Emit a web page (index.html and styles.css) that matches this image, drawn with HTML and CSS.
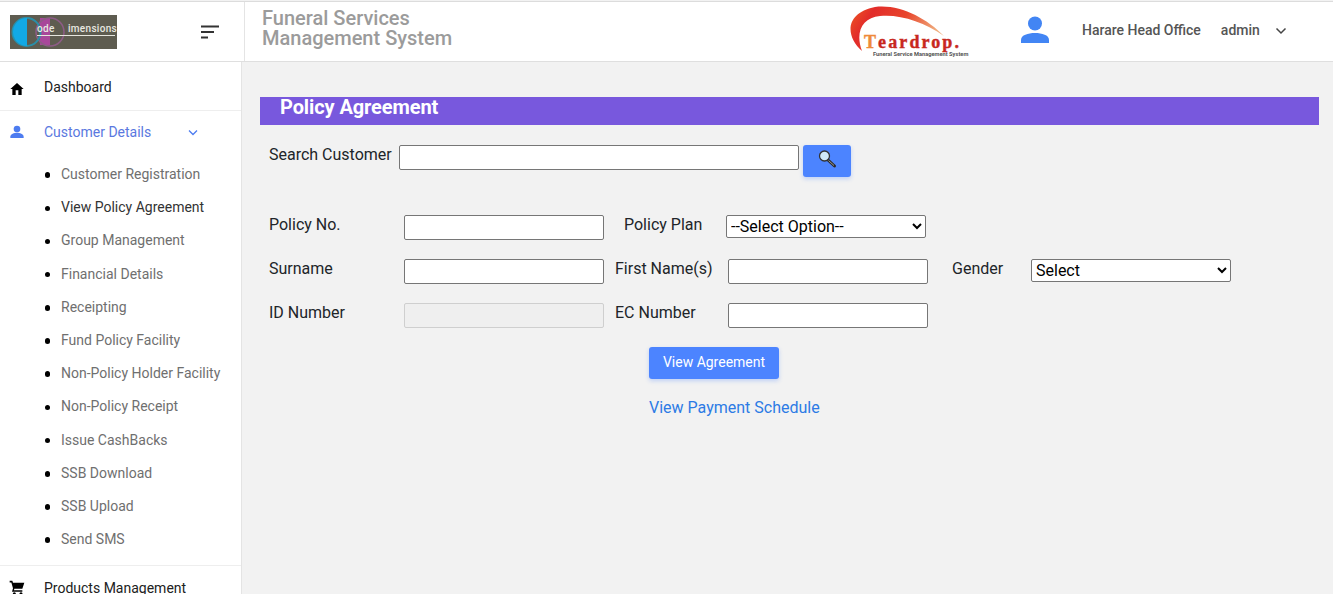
FILE: index.html
```html
<!DOCTYPE html>
<html lang="en">
<head>
  <meta charset="UTF-8" />
  <meta name="viewport" content="width=device-width, initial-scale=1.0"/>
  <title>Policy Agreement</title>
  <link rel="stylesheet" href="styles.css">
</head>
<body>
<header class="topbar">
  <div class="brand">
    <div class="code-logo">
      <svg class="code-logo-art" width="107" height="34" viewBox="0 0 107 34">
        <rect x="30" y="3" width="10" height="27" fill="#a8479a"/>
        <circle cx="40" cy="17" r="14" fill="none" stroke="#8d5c86" stroke-width="1.500"/>
        <circle cx="16.500" cy="17" r="14" fill="none" stroke="#2a8fa8" stroke-width="2"/>
        <path d="M17 3 A14 14 0 0 0 17 31 Z" fill="#12a9e6"/>
        <rect x="27" y="20" width="78" height="1" fill="#e6e6de"/>
      </svg>
      <span class="code-word code-word-a">ode</span>
      <span class="code-word code-word-b">imensions</span>
    </div>
    <button class="menu-toggle" aria-label="Menu">
      <svg width="20" height="14" viewBox="0 0 20 14"><path d="M1 1.500h18M1 7h13M1 12.500h7" stroke="#333" stroke-width="2" fill="none"/></svg>
    </button>
  </div>
  <div class="app-title">
    <span class="title-line">Funeral Services</span>
    <span class="title-line">Management System</span>
  </div>
  <div class="teardrop">
    <svg width="122" height="52" viewBox="0 0 122 52">
      <defs>
        <linearGradient id="swoosh" x1="0" y1="0" x2="1" y2="0.300">
          <stop offset="0" stop-color="#ee5a22"/>
          <stop offset="0.250" stop-color="#e22c2a"/>
          <stop offset="0.600" stop-color="#e8452c"/>
          <stop offset="1" stop-color="#f0b080"/>
        </linearGradient>
      </defs>
      <path d="M14 45 C-3 30 -3 7 27 1 C52 -2 78 12 96 30 C76 16 52 8 32 10 C14 12 7 26 14 45 Z" fill="url(#swoosh)"/>
    </svg>
    <span class="teardrop-name"><b>T</b>eardrop.</span>
    <span class="teardrop-sub">Funeral Service Management System</span>
  </div>
  <svg class="user-icon" width="28" height="28" viewBox="0 0 28 28"><circle cx="14" cy="7.500" r="7" fill="#4285f4"/><path d="M0 27v-3c0-5 7-7 14-7s14 2 14 7v3z" fill="#4285f4"/></svg>
  <span class="office">Harare Head Office</span>
  <span class="username">admin</span>
  <svg class="user-caret" width="12" height="8" viewBox="0 0 12 8"><path d="M1.500 1.500 6 6l4.500-4.500" stroke="#444" stroke-width="1.500" fill="none"/></svg>
</header>

<div class="layout">
  <nav class="sidebar">
    <div class="nav-item nav-dashboard">
      <svg class="nav-icon" width="16" height="16" viewBox="0 0 24 24"><path d="M10 21v-7h4v7h5v-9h3L12 3 2 12h3v9z" fill="#000"/></svg>
      <span>Dashboard</span>
    </div>
    <div class="nav-item nav-customer">
      <svg class="nav-icon" width="16" height="16" viewBox="0 0 24 24"><circle cx="12" cy="7.500" r="5" fill="#4d7cf0"/><path d="M2 21v-2c0-4 6-6 10-6s10 2 10 6v2z" fill="#4d7cf0"/></svg>
      <span>Customer Details</span>
      <svg class="nav-caret" width="10" height="7" viewBox="0 0 10 7"><path d="M1 1.500 5 5.500l4-4" stroke="#4d7cf0" stroke-width="1.300" fill="none"/></svg>
    </div>
    <ul class="subnav">
      <li>Customer Registration</li>
      <li class="current">View Policy Agreement</li>
      <li>Group Management</li>
      <li>Financial Details</li>
      <li>Receipting</li>
      <li>Fund Policy Facility</li>
      <li>Non-Policy Holder Facility</li>
      <li>Non-Policy Receipt</li>
      <li>Issue CashBacks</li>
      <li>SSB Download</li>
      <li>SSB Upload</li>
      <li>Send SMS</li>
    </ul>
    <div class="nav-item nav-products">
      <svg class="nav-icon" width="17" height="17" viewBox="0 0 24 24"><path d="M1 2h4l1 3h17l-3 9H8l-.5 2H20v2.500H4.500L6 13 3.500 4.500H1z" fill="#000"/><circle cx="8" cy="21.500" r="2.300" fill="#000"/><circle cx="18" cy="21.500" r="2.300" fill="#000"/></svg>
      <span>Products Management</span>
    </div>
  </nav>

  <main class="content">
    <h1 class="banner">Policy Agreement</h1>

    <div class="search-row">
      <label class="search-label">Search Customer</label>
      <input type="text" class="field search-field">
      <button class="btn search-btn" aria-label="Search">
        <svg width="20" height="20" viewBox="0 0 20 20">
          <path d="M11 11l6.500 6" stroke="#2b2b2b" stroke-width="3" stroke-linecap="round"/>
          <path d="M11.500 11.500l5.500 5" stroke="#9a9a9a" stroke-width="1"/>
          <circle cx="7.500" cy="7" r="5" fill="#cfe8f8" stroke="#333" stroke-width="1.300"/>
        </svg>
      </button>
    </div>

    <div class="form-row">
      <label class="lbl-first">Policy No.</label>
      <input type="text" class="field">
      <label class="lbl-plan">Policy Plan</label>
      <select class="field-select">
        <option>--Select Option--</option>
      </select>
    </div>

    <div class="form-row">
      <label class="lbl-first">Surname</label>
      <input type="text" class="field">
      <label class="lbl-second">First Name(s)</label>
      <input type="text" class="field">
      <label class="lbl-gender">Gender</label>
      <select class="field-select">
        <option>Select</option>
      </select>
    </div>

    <div class="form-row">
      <label class="lbl-first">ID Number</label>
      <input type="text" class="field" disabled>
      <label class="lbl-second">EC Number</label>
      <input type="text" class="field">
    </div>

    <button class="btn view-btn">View Agreement</button>
    <a class="schedule-link" href="#">View Payment Schedule</a>
  </main>
</div>
</body>
</html>
```

FILE: styles.css
```css
html, body {
  height: 100%;
}

body {
  margin: 0;
  height: 594px;
  overflow: hidden;
  font-family: Roboto, "Liberation Sans", sans-serif;
  background-color: #f2f2f2;
  color: #212529;
}

.topbar {
  display: flex;
  align-items: center;
  height: 59px;
  margin-top: 1px;
  background-color: white;
  border-top: 1px solid #dcdcdc;
  border-bottom: 1px solid #dfdfdf;
  box-sizing: content-box;
}

.brand {
  display: flex;
  align-items: center;
  justify-content: space-between;
  width: 245px;
  height: 100%;
  padding: 0 24px 0 10px;
  box-sizing: border-box;
  border-right: 1px solid #e4e4e4;
  flex-shrink: 0;
}

.code-logo {
  position: relative;
  width: 107px;
  height: 34px;
  background-color: #5e5c50;
}

.code-logo-art {
  display: block;
}

.code-word {
  position: absolute;
  top: 8px;
  font-size: 10px;
  font-weight: 500;
  letter-spacing: 0.3px;
  line-height: 12px;
  color: #e8e8e0;
}

.code-word-a {
  left: 27px;
}

.code-word-b {
  left: 58px;
}

.menu-toggle {
  display: flex;
  padding: 0;
  background: none;
  border: none;
}

.app-title {
  width: 469px;
  margin-left: 17px;
  margin-top: -7px;
  font-size: 20px;
  font-weight: 500;
  color: #9b9b9b;
  flex-shrink: 0;
}

.title-line {
  display: block;
  height: 20px;
  line-height: 20px;
}

.teardrop {
  position: relative;
  width: 122px;
  height: 52px;
  margin-left: 117px;
  flex-shrink: 0;
}

.teardrop svg {
  display: block;
}

.teardrop-name {
  position: absolute;
  left: 16px;
  top: 27px;
  font-family: "Liberation Serif", serif;
  font-size: 18px;
  font-weight: 700;
  letter-spacing: 2.100px;
  line-height: 18px;
  color: #c8281e;
  -webkit-text-stroke: 0.4px #c8281e;
  white-space: nowrap;
}

.teardrop-name b {
  color: #ef8a3a;
  -webkit-text-stroke: 0.4px #ef8a3a;
}

.teardrop-sub {
  position: absolute;
  left: 25px;
  top: 45px;
  font-size: 5.700px;
  font-weight: 700;
  line-height: 6px;
  white-space: nowrap;
  color: #555;
}

.user-icon {
  margin-left: 51px;
  margin-top: -3px;
  flex-shrink: 0;
}

.office {
  margin-left: 33px;
  margin-top: -3px;
  font-size: 14px;
  font-weight: 500;
  color: #555;
  white-space: nowrap;
}

.username {
  margin-left: 20px;
  margin-top: -3px;
  font-size: 14px;
  font-weight: 500;
  color: #555;
}

.user-caret {
  margin-left: 15px;
  margin-top: -2px;
}

.layout {
  display: flex;
  height: 533px;
  overflow: hidden;
}

.sidebar {
  width: 242px;
  box-sizing: border-box;
  background-color: white;
  border-right: 1px solid #e4e4e4;
  flex-shrink: 0;
}

.nav-item {
  display: flex;
  align-items: center;
  box-sizing: border-box;
  font-size: 14px;
  padding-left: 9px;
}

.nav-icon {
  width: 16px;
  margin-right: 19px;
  flex-shrink: 0;
}

.nav-dashboard {
  height: 49px;
  padding-top: 2px;
  color: #212121;
  border-bottom: 1px solid #eee;
}

.nav-dashboard .nav-icon {
  margin-top: 3px;
}

.nav-customer {
  height: 42px;
  color: #5a78e0;
}

.nav-caret {
  margin-left: 37px;
}

.subnav {
  margin: 0;
  padding: 4.500px 0 9px 44.500px;
  list-style: none;
  font-size: 14px;
  color: #6f6f6f;
  border-bottom: 1px solid #eee;
}

.subnav li {
  display: flex;
  align-items: center;
  gap: 11px;
  height: 33.200px;
  white-space: nowrap;
}

.subnav li::before {
  content: "";
  width: 5.500px;
  height: 5.500px;
  margin-top: 2px;
  border-radius: 50%;
  background-color: #000;
  flex-shrink: 0;
}

.subnav .current {
  color: #333;
}

.nav-products {
  height: 44px;
  color: #212121;
}

.content {
  flex: 1;
  padding: 35px 14px 0 18px;
}

.banner {
  height: 28px;
  margin: 0;
  padding-left: 20px;
  font-size: 20px;
  font-weight: 700;
  line-height: 21px;
  letter-spacing: -0.1px;
  color: white;
  background-color: #7858dd;
}

.search-row {
  display: flex;
  align-items: flex-start;
  margin-top: 20px;
  padding-left: 9px;
}

.search-row label,
.form-row label {
  font-size: 16px;
  line-height: 19px;
  color: #212529;
  flex-shrink: 0;
}

.search-label {
  width: 130px;
}

.field {
  width: 200px;
  height: 25px;
  padding: 0 4px;
  box-sizing: border-box;
  font-size: 16px;
  background-color: white;
  border: 1px solid #767676;
  border-radius: 2px;
  flex-shrink: 0;
}

.field:disabled {
  background-color: #efefef;
  border-color: #cfcfcf;
}

.search-field {
  width: 400px;
}

.btn {
  display: block;
  color: white;
  background-color: #4c84ff;
  border: none;
  border-radius: 3px;
  box-shadow: 0 2px 4px rgba(76, 132, 255, 0.3);
  font-family: Roboto, "Liberation Sans", sans-serif;
}

.search-btn {
  display: flex;
  align-items: center;
  justify-content: center;
  width: 48px;
  height: 32px;
  margin-left: 4px;
  padding: 0 0 5px;
}

.form-row {
  display: flex;
  align-items: flex-start;
  height: 25px;
  margin-bottom: 19px;
  padding-left: 9px;
}

.search-row + .form-row {
  margin-top: 38px;
}

.lbl-first {
  width: 135px;
}

.lbl-second {
  width: 113px;
  margin-left: 11px;
}

.lbl-plan {
  width: 102px;
  margin-left: 20px;
}

.lbl-gender {
  width: 79px;
  margin-left: 24px;
}

.field-select {
  width: 200px;
  height: 23px;
  padding: 0;
  box-sizing: border-box;
  font-family: Roboto, "Liberation Sans", sans-serif;
  font-size: 16px;
  color: #000;
  background-color: white;
  border: 1px solid #767676;
  border-radius: 2px;
  flex-shrink: 0;
}

.view-btn {
  width: 130px;
  height: 32px;
  margin: 0 0 0 389px;
  padding: 0 0 2px;
  font-size: 14px;
  font-weight: 400;
}

.schedule-link {
  display: block;
  margin: 19px 0 0 389px;
  font-size: 16px;
  line-height: 19px;
  color: #2c7be5;
  text-decoration: none;
}
```
